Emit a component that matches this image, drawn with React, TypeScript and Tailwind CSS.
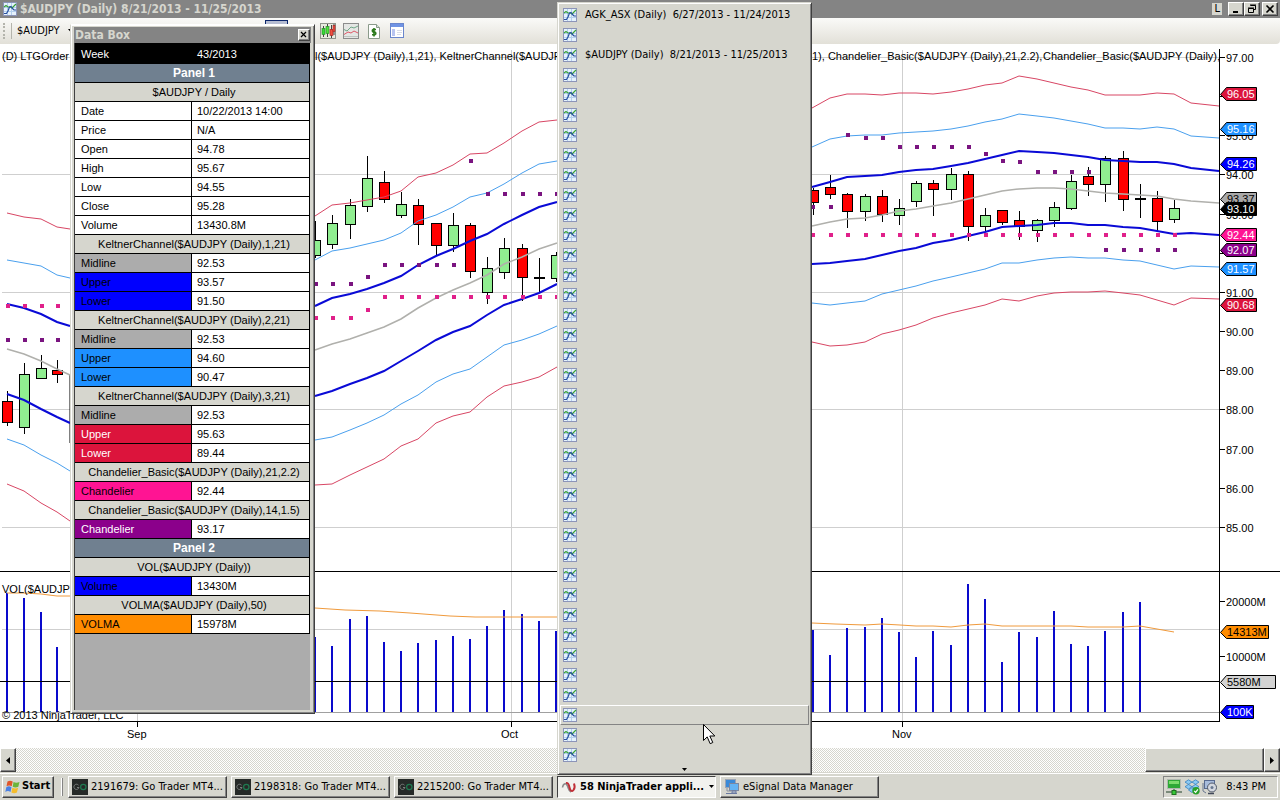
import React from 'react';
import clsx from 'clsx';

// ------------------------------------------------------------------
// Chart data (drawing units of the chart canvas)
// ------------------------------------------------------------------

type Candle = [x: number, high: number, top: number, bottom: number, low: number, kind: 'u' | 'd' | 'n'];

const LEFT_X = [7, 24, 41, 57, 70];
const MID_X = [315, 332, 350, 367, 384, 401, 418, 436, 453, 470, 487, 504, 522, 539, 557];
const RIGHT_X = [
  812, 830, 847, 865, 882, 899, 916, 933, 951, 968, 985, 1002, 1019, 1037, 1054, 1071, 1088, 1105, 1123, 1140, 1157,
  1174, 1191, 1219,
];

const CANDLES: Candle[] = [
  [7, 391, 402, 423, 426, 'd'],
  [24, 363, 375, 428, 434, 'u'],
  [41, 355, 369, 379, 379, 'u'],
  [57, 360, 371, 375, 383, 'd'],
  [315, 221, 241, 256, 258, 'u'],
  [332, 215, 224, 245, 249, 'u'],
  [350, 199, 206, 225, 239, 'u'],
  [367, 156, 179, 207, 212, 'u'],
  [384, 171, 183, 200, 203, 'd'],
  [401, 192, 205, 216, 218, 'u'],
  [418, 199, 206, 225, 245, 'd'],
  [436, 223, 224, 246, 256, 'd'],
  [453, 213, 226, 246, 252, 'u'],
  [470, 223, 226, 272, 278, 'd'],
  [487, 257, 269, 293, 304, 'u'],
  [504, 238, 249, 273, 279, 'u'],
  [522, 244, 249, 278, 301, 'd'],
  [539, 258, 278, 278, 293, 'n'],
  [556, 252, 256, 279, 282, 'u'],
  [813, 188, 191, 203, 215, 'd'],
  [830, 175, 188, 195, 199, 'd'],
  [847, 193, 195, 212, 228, 'd'],
  [865, 194, 197, 212, 221, 'u'],
  [882, 190, 197, 215, 222, 'd'],
  [899, 199, 209, 216, 225, 'u'],
  [916, 181, 184, 202, 207, 'u'],
  [933, 180, 184, 190, 216, 'd'],
  [951, 168, 175, 190, 200, 'u'],
  [968, 171, 175, 227, 241, 'd'],
  [985, 208, 216, 227, 231, 'u'],
  [1002, 211, 211, 223, 225, 'd'],
  [1019, 211, 221, 227, 240, 'd'],
  [1037, 219, 221, 231, 242, 'u'],
  [1054, 202, 208, 221, 227, 'u'],
  [1071, 175, 182, 209, 210, 'u'],
  [1088, 167, 177, 185, 196, 'd'],
  [1105, 156, 159, 185, 202, 'u'],
  [1123, 151, 159, 200, 211, 'd'],
  [1140, 184, 199, 199, 218, 'n'],
  [1157, 191, 199, 222, 231, 'd'],
  [1174, 200, 209, 220, 223, 'u'],
];

interface Channel {
  color: string;
  width: number;
  left: number[];
  mid: number[];
  right: number[];
}

const CHANNELS: Channel[] = [
  {
    color: '#d84664',
    width: 1,
    left: [213, 217, 219, 227, 229],
    mid: [216, 205, 203, 200, 197, 191, 177, 173, 165, 154, 153, 143, 131, 122, 120],
    right: [108, 98, 94, 94, 95, 93, 93, 94, 92, 89, 85, 83, 76, 79, 83, 87, 90, 95, 95, 95, 93, 94, 103, 106],
  },
  {
    color: '#4aa0ee',
    width: 1,
    left: [260, 263, 266, 275, 278],
    mid: [260, 251, 248, 244, 240, 233, 221, 215, 207, 197, 193, 184, 173, 164, 161],
    right: [
      147, 139, 136, 135, 135, 133, 132, 131, 129, 126, 122, 119, 114, 116, 118, 121, 124, 128, 128, 129, 127, 129, 136,
      138,
    ],
  },
  {
    color: '#0a0ad6',
    width: 2,
    left: [304, 308, 314, 322, 326],
    mid: [306, 298, 294, 289, 283, 276, 265, 256, 249, 241, 234, 224, 215, 207, 202],
    right: [
      187, 182, 177, 176, 175, 172, 170, 169, 166, 163, 159, 155, 151, 152, 153, 155, 157, 160, 161, 162, 162, 164, 168,
      171,
    ],
  },
  {
    color: '#b0b0ac',
    width: 1.5,
    left: [349, 354, 361, 369, 375],
    mid: [350, 344, 339, 333, 327, 319, 308, 298, 290, 283, 275, 264, 257, 249, 243],
    right: [
      226, 222, 219, 218, 215, 211, 209, 206, 203, 199, 195, 191, 189, 188, 188, 189, 191, 193, 194, 195, 196, 199, 201,
      203,
    ],
  },
  {
    color: '#0a0ad6',
    width: 2,
    left: [394, 400, 409, 417, 423],
    mid: [396, 391, 384, 378, 371, 361, 351, 340, 332, 326, 315, 305, 299, 293, 284],
    right: [
      264, 263, 261, 259, 255, 251, 248, 243, 240, 236, 232, 227, 226, 225, 223, 223, 225, 225, 227, 228, 231, 234, 233,
      235,
    ],
  },
  {
    color: '#4aa0ee',
    width: 1,
    left: [439, 445, 455, 463, 471],
    mid: [440, 437, 430, 423, 415, 404, 395, 382, 374, 369, 357, 345, 340, 334, 326],
    right: [
      303, 305, 303, 301, 294, 290, 286, 281, 277, 273, 269, 263, 263, 260, 258, 257, 258, 258, 260, 261, 265, 269, 266,
      267,
    ],
  },
  {
    color: '#d84664',
    width: 1,
    left: [484, 491, 503, 512, 521],
    mid: [485, 484, 475, 467, 459, 446, 439, 423, 416, 412, 397, 386, 382, 377, 367],
    right: [
      342, 346, 345, 342, 334, 330, 325, 318, 313, 309, 305, 299, 301, 296, 293, 292, 292, 291, 293, 295, 300, 305, 298,
      299,
    ],
  },
];

const PINK = '#e0208a';
const PURPLE = '#7a1480';

const DOTS: { color: string; y: number; xs: number[] }[] = [
  { color: PINK, y: 306, xs: [8, 25, 42, 58] },
  { color: PINK, y: 318, xs: [316, 333, 351] },
  { color: PINK, y: 310, xs: [368] },
  { color: PINK, y: 297, xs: [385, 402, 419, 437, 454, 471, 488, 505, 523, 540, 557] },
  { color: PINK, y: 235, xs: RIGHT_X.slice(0, 22).map((x) => x + 1) },
  { color: PURPLE, y: 340, xs: [8, 25, 42, 58] },
  { color: PURPLE, y: 284, xs: [316, 333, 351] },
  { color: PURPLE, y: 277, xs: [368] },
  { color: PURPLE, y: 265, xs: [385, 402, 419, 437, 454] },
  { color: PURPLE, y: 161, xs: [471] },
  { color: PURPLE, y: 194, xs: [488, 505, 523, 540, 557] },
  { color: PURPLE, y: 207, xs: [813, 831] },
  { color: PURPLE, y: 135, xs: [848] },
  { color: PURPLE, y: 138, xs: [866, 883] },
  { color: PURPLE, y: 147, xs: [900, 917, 934, 952, 969] },
  { color: PURPLE, y: 154, xs: [986] },
  { color: PURPLE, y: 161, xs: [1003] },
  { color: PURPLE, y: 162, xs: [1020] },
  { color: PURPLE, y: 172, xs: [1038, 1055, 1072, 1089] },
  { color: PURPLE, y: 250, xs: [1106, 1124, 1141, 1158, 1175] },
];

const VOLUME: [number, number][] = [
  [6, 593], [23, 598], [40, 612], [56, 647],
  [314, 637], [331, 646], [349, 619], [366, 616], [383, 642], [400, 651], [417, 643], [435, 640],
  [452, 636], [469, 639], [486, 626], [503, 610], [521, 614], [538, 621], [555, 631],
  [812, 630], [829, 655], [846, 628], [864, 627], [881, 618], [898, 632], [915, 657], [932, 631],
  [950, 645], [967, 584], [984, 599], [1001, 662], [1018, 632], [1036, 637], [1053, 611], [1070, 644],
  [1087, 646], [1104, 631], [1122, 612], [1139, 602],
];

const VOLMA = [
  '7,593 24,593 41,594 57,596 70,596',
  '315,608 345,610 380,611 410,613 450,616 475,617 557,617',
  '812,623 835,624 865,625 882,624 900,625 916,626 933,626 951,627 968,625 985,624 1002,626 1071,626 1088,627 1123,627 1140,626 1174,632',
];

const PRICE_TICKS = [97, 96, 95, 94, 93, 92, 91, 90, 89, 88, 87, 86, 85];
// these prices sit fully behind a value tag
const COVERED_TICKS = [96, 92];

const TAGS: { y: number; text: string; bg: string; fg: string; right: number }[] = [
  { y: 94, text: '96.05', bg: '#dc143c', fg: '#fff', right: 1257 },
  { y: 129, text: '95.16', bg: '#1e90ff', fg: '#fff', right: 1257 },
  { y: 164, text: '94.26', bg: '#0000ff', fg: '#fff', right: 1257 },
  { y: 199, text: '93.37', bg: '#a9a9a9', fg: '#000', right: 1257 },
  { y: 209, text: '93.10', bg: '#000', fg: '#fff', right: 1257 },
  { y: 235, text: '92.44', bg: '#ff1493', fg: '#fff', right: 1257 },
  { y: 250, text: '92.07', bg: '#8b008b', fg: '#fff', right: 1257 },
  { y: 269, text: '91.57', bg: '#1e90ff', fg: '#fff', right: 1257 },
  { y: 305, text: '90.68', bg: '#dc143c', fg: '#fff', right: 1257 },
  { y: 632, text: '14313M', bg: '#ff8c00', fg: '#000', right: 1269 },
  { y: 682, text: '5580M', bg: '#d3d3d3', fg: '#000', right: 1276 },
  { y: 712, text: '100K', bg: '#0000ff', fg: '#fff', right: 1254 },
];

const priceY = (price: number) => Math.round(58 + (97 - price) * 39.15);

const toPoints = (xs: number[], ys: number[]) => ys.map((y, i) => `${xs[i]},${y}`).join(' ');

// ------------------------------------------------------------------
// Icons
// ------------------------------------------------------------------

function ChartIcon() {
  return (
    <svg className="h-3.5 w-3.5 shrink-0" viewBox="0 0 14 14" aria-hidden="true">
      <rect x="0.5" y="0.5" width="13" height="13" fill="#e6f2fc" stroke="#8c94b8" />
      <path d="M4.5 1v12M8.5 1v12M1 5.5h12M1 9.5h12" stroke="#b4d0ee" />
      <path d="M1 5 3 3.500l2 1.500h2.500L9 6l4-4" fill="none" stroke="#38a038" strokeWidth="1.2" />
      <path d="M1 11.5h2.500L5 9l1.500-4L8 4.500l1.500 2L11 8h2" fill="none" stroke="#2850a0" strokeWidth="1.2" />
    </svg>
  );
}

function CandlesIcon() {
  return (
    <svg className="h-4 w-4" viewBox="0 0 16 16" aria-hidden="true">
      <rect x="0.5" y="0.5" width="15" height="15" fill="#e8ece0" stroke="#90948c" />
      <path d="M3.5 3v11M7.5 1v13M11.5 2v13M14 1v11" stroke="#444" />
      <rect x="2" y="5.5" width="3" height="6" fill="#38d838" stroke="#1f8a1f" strokeWidth="0.6" />
      <rect x="6" y="3.5" width="3" height="7" fill="#50e040" stroke="#1f8a1f" strokeWidth="0.6" />
      <rect x="10" y="6.5" width="3" height="6" fill="#f05040" stroke="#a02020" strokeWidth="0.6" />
      <rect x="13" y="2.5" width="2" height="6" fill="#f05040" stroke="#a02020" strokeWidth="0.6" />
    </svg>
  );
}

function LinesIcon() {
  return (
    <svg className="h-4 w-4" viewBox="0 0 16 16" aria-hidden="true">
      <rect x="0.5" y="0.5" width="15" height="15" fill="#e4e6e4" stroke="#8c8c8c" />
      <path d="M1 6.5 4 8l4-4 3 1 4-2" fill="none" stroke="#70a888" />
      <path d="M1 11.5 5 9l3 1 3-2 4 2" fill="none" stroke="#e05868" />
      <path d="M1 13.5h14" stroke="#c0c4c0" />
    </svg>
  );
}

function DollarIcon() {
  return (
    <svg className="h-4 w-4" viewBox="0 0 16 16" aria-hidden="true">
      <path d="M2.5 1.5h8l3 3v11h-11z" fill="#fff" stroke="#8a9a8a" />
      <path d="M10.5 1.5v3h3" fill="#d8e4d8" stroke="#8a9a8a" />
      <path d="M10 6.5H7.2a1.4 1.4 0 0 0 0 2.6h1.6a1.4 1.4 0 0 1 0 2.7H6M8 5v8.5" fill="none" stroke="#2c7a1c" strokeWidth="1.6" />
    </svg>
  );
}

function PanelIcon() {
  return (
    <svg className="h-4 w-4" viewBox="0 0 16 16" aria-hidden="true">
      <rect x="1.5" y="0.5" width="13" height="14" fill="#fff" stroke="#6a86cc" />
      <rect x="2" y="1" width="12" height="3" fill="#6f93e4" />
      <rect x="3" y="6" width="3" height="7" fill="#b8c4f0" />
      <path d="M8 7.5h5M8 9.5h5M8 11.5h4" stroke="#d8dce8" />
    </svg>
  );
}

function GoIcon() {
  return (
    <svg className="h-4 w-4 shrink-0" viewBox="0 0 16 16" aria-hidden="true">
      <rect width="16" height="16" fill="#262a28" />
      <path d="M6.5 6.2A2.6 2.6 0 1 0 7 8.5H5" fill="none" stroke="#7a7e7c" />
      <circle cx="11.3" cy="8" r="2.7" fill="none" stroke="#1f7a50" strokeWidth="1.2" />
    </svg>
  );
}

function NinjaIcon() {
  return (
    <svg className="h-4 w-4 shrink-0" viewBox="0 0 16 16" aria-hidden="true">
      <path d="M1.500 8.500C2 5 4.500 3.500 6 6s1.500 6 4 7" fill="none" stroke="#8a8a8a" strokeWidth="1.6" />
      <path d="M5 4c2.500-.5 3 2 3.500 4.500s2 5 4 2.500 1-5 .5-6.500" fill="none" stroke="#c03038" strokeWidth="2" />
    </svg>
  );
}

function ComputersIcon() {
  return (
    <svg className="h-4 w-4 shrink-0" viewBox="0 0 16 16" aria-hidden="true">
      <rect x="1.5" y="0.5" width="10" height="8" fill="#3a8ad8" stroke="#9aa4b4" />
      <rect x="5.5" y="4.5" width="9" height="7" fill="#64b4f4" stroke="#7c88a0" />
      <path d="M8 12h4v2H8zM2 14.5h11" stroke="#6878a0" fill="#c8ccd4" />
      <path d="M3 9v3h4" fill="none" stroke="#8890a0" />
    </svg>
  );
}

function WindowsIcon() {
  return (
    <svg className="h-4 w-4 shrink-0" viewBox="0 0 16 16" aria-hidden="true">
      <path d="M2.500 2.500c2-1.300 3.500-1 5.200 0L6.700 7.300c-1.700-1-3.200-1.200-5.200 0z" fill="#e0562a" />
      <path d="M8.500 3c2 1 3.700 1 6 0l-1.200 4.800c-2 1-3.800 1-5.600 0z" fill="#6cb43c" />
      <path d="M1.300 8.200c2-1.200 3.500-1 5.200 0l-1 4.700c-1.700-1-3.200-1.200-5.200 0z" fill="#4a80e4" />
      <path d="M7.400 8.700c2 1 3.600 1 5.700 0l-1.200 4.700c-2 1-3.700 1-5.500 0z" fill="#f4bc2c" />
    </svg>
  );
}

function NetworkIcon() {
  return (
    <svg className="h-4 w-4" viewBox="0 0 16 16" aria-hidden="true">
      <rect x="1.5" y="0.5" width="13" height="9" fill="#2ea836" stroke="#b0b8b0" />
      <path d="M3 2h10v3H3z" fill="#7cdc6c" />
      <path d="M8 10v3M0 13h16" stroke="#7a8a7a" strokeWidth="2" />
      <rect x="6" y="11.5" width="4" height="4" fill="#38c838" stroke="#1c701c" />
    </svg>
  );
}

function DropboxIcon() {
  return (
    <svg className="h-4 w-4" viewBox="0 0 16 16" aria-hidden="true">
      <path
        d="m4.500.800 3.500 2.300-3.500 2.300L1 3.100zm7 0L15 3.100l-3.500 2.300L8 3.100zM4.500 5.400 8 7.700 4.500 10 1 7.700zm7 0L15 7.700 11.500 10 8 7.700zM8 8.700l3.500 2.300L8 13.500 4.500 11z"
        fill="#8ccaf4"
        stroke="#2c78b8"
        strokeWidth="0.7"
      />
      <circle cx="12" cy="11.8" r="3.7" fill="#28a028" />
      <path d="m10.200 11.800 1.400 1.500 2.300-3" fill="none" stroke="#fff" strokeWidth="1.2" />
    </svg>
  );
}

function DriveIcon() {
  return (
    <svg className="h-4 w-4" viewBox="0 0 16 16" aria-hidden="true">
      <rect x="2.5" y="1.5" width="10" height="8" fill="#a8bcdc" stroke="#586a90" />
      <path d="M1 4v8l3 2" fill="none" stroke="#6a7890" />
      <circle cx="10" cy="8.5" r="4.5" fill="#d4d8e0" stroke="#505868" />
      <circle cx="10" cy="8.5" r="1.5" fill="#687890" />
      <path d="M6 14.5h6" stroke="#404858" strokeWidth="1.5" />
    </svg>
  );
}

// ------------------------------------------------------------------
// Classic raised button
// ------------------------------------------------------------------

const RAISED =
  'border border-t-white border-l-white border-r-[#404040] border-b-[#404040] bg-[#d6d6ce] shadow-[inset_-1px_-1px_0_#848484]';

function BevelButton({
  className,
  children,
  ...rest
}: React.ButtonHTMLAttributes<HTMLButtonElement>) {
  return (
    <button type="button" className={clsx(RAISED, 'flex items-center', className)} {...rest}>
      {children}
    </button>
  );
}

// ------------------------------------------------------------------
// Title bar and toolbar
// ------------------------------------------------------------------

function TitleBar() {
  return (
    <header className="flex h-[18px] items-center gap-[3px] bg-[#848484] pr-0.5 pl-[3px]">
      <ChartIcon />
      <h1 className="text-[12px] leading-4 font-bold whitespace-pre text-[#d6d6ce]">
        {'$AUDJPY (Daily) 8/21/2013 - 11/25/2013'}
      </h1>
      <div className="ml-auto flex items-center">
        <span className="mr-1.5 bg-[#d6d6ce] px-0.5 text-[11px] leading-[12px]">L</span>
        <BevelButton className="h-3.5 w-4 justify-center" aria-label="Minimize">
          <svg className="h-2.5 w-2.5" viewBox="0 0 10 10">
            <path d="M2 8h5" stroke="#000" strokeWidth="2" />
          </svg>
        </BevelButton>
        <BevelButton className="h-3.5 w-4 justify-center" aria-label="Restore">
          <svg className="h-2.5 w-2.5" viewBox="0 0 10 10">
            <path d="M3.500 1.500h5v4h-2M3 1h6M1.500 4.500h5v4h-5zM1 4h6" fill="none" stroke="#000" />
          </svg>
        </BevelButton>
        <BevelButton className="ml-0.5 h-3.5 w-4 justify-center" aria-label="Close">
          <svg className="h-2.5 w-2.5" viewBox="0 0 10 10">
            <path d="m1.500 1.500 7 7m0-7-7 7" stroke="#000" strokeWidth="1.6" />
          </svg>
        </BevelButton>
      </div>
    </header>
  );
}

function Toolbar() {
  return (
    <div className="flex h-[26px] items-center rounded-br-sm bg-linear-to-b from-[#fafaf8] to-[#e2e0d8] pl-[3px]">
      <span className="h-4 w-0 border-l-2 border-dotted border-[#b4b4ac]" />
      <span className="ml-1.5 h-4 w-px bg-[#b4b4ac]" />
      <label className="ml-[5px] flex items-center">
        <select aria-label="Instrument" className="w-12 appearance-none bg-transparent text-[11px] leading-4">
          <option>$AUDJPY</option>
        </select>
        <svg className="ml-0.5 h-1 w-2" viewBox="0 0 8 4" aria-hidden="true">
          <path d="M1 0h5L3.500 3z" />
        </svg>
      </label>
      <button
        type="button"
        aria-label="Data Box"
        className="ml-[190px] h-[22px] w-[23px] border border-[#0a246a] bg-[#b6bdd2]"
      />
      <div className="ml-8 flex gap-[7px]">
        <button type="button" aria-label="Chart style"><CandlesIcon /></button>
        <button type="button" aria-label="Indicators"><LinesIcon /></button>
        <button type="button" aria-label="Strategies"><DollarIcon /></button>
        <button type="button" aria-label="Properties"><PanelIcon /></button>
      </div>
    </div>
  );
}

// ------------------------------------------------------------------
// Chart
// ------------------------------------------------------------------

function ChartCanvas() {
  return (
    <svg
      className="block w-full bg-white font-['Liberation_Sans',sans-serif] text-[11px]"
      viewBox="0 44 1280 704"
      role="img"
      aria-label="$AUDJPY daily price and volume"
    >
      <defs>
        <clipPath id="plot">
          <rect x="0" y="44" width="1219" height="704" />
        </clipPath>
      </defs>

      {/* grid */}
      <g stroke="#cfcfcf" shapeRendering="crispEdges">
        {[97, 94, 91, 88, 85].map((p) => (
          <line key={p} x1="2" x2="1219" y1={priceY(p) - 0.5} y2={priceY(p) - 0.5} />
        ))}
        <line x1="2" x2="1219" y1="629.5" y2="629.5" />
        {[137.5, 511.5, 902.5].map((x) => (
          <line key={x} x1={x} x2={x} y1="50" y2="721" />
        ))}
        <line x1="2" x2="1219" y1="712.5" y2="712.5" stroke="#a0a0a0" />
      </g>

      {/* volume */}
      <g fill="#0a0acc">
        {VOLUME.map(([x, y]) => (
          <rect key={x} x={x} y={y} width="2" height={712 - y} />
        ))}
      </g>
      <line x1="0" x2="1219" y1="681.5" y2="681.5" stroke="#000" />
      {VOLMA.map((points) => (
        <polyline key={points} points={points} fill="none" stroke="#f09a3c" />
      ))}

      {/* candles */}
      <path d="M70 375V443" stroke="#000" />
      {CANDLES.map(([x, high, top, bottom, low, kind]) => (
        <g key={x} stroke="#000" shapeRendering="crispEdges">
          <line x1={x + 0.5} x2={x + 0.5} y1={high} y2={low} />
          {kind === 'n' ? (
            <line x1={x - 5} x2={x + 6} y1={top} y2={top} strokeWidth="2" />
          ) : (
            <rect
              x={x - 4.5}
              y={top - 0.5}
              width="10"
              height={bottom - top}
              fill={kind === 'u' ? '#90ee90' : '#ff0000'}
            />
          )}
        </g>
      ))}

      {/* channels */}
      {CHANNELS.map((c, i) => (
        <g key={i} fill="none" stroke={c.color} strokeWidth={c.width}>
          <polyline points={toPoints(LEFT_X, c.left)} />
          <polyline points={toPoints(MID_X, c.mid)} />
          <polyline points={toPoints(RIGHT_X, c.right)} />
        </g>
      ))}

      {DOTS.map((d) =>
        d.xs.map((x) => <rect key={`${x}-${d.y}`} x={x - 2} y={d.y - 2} width="4" height="4" fill={d.color} />)
      )}

      {/* frame */}
      <g stroke="#000" shapeRendering="crispEdges">
        <line x1="0" x2="1280" y1="571.5" y2="571.5" />
        <line x1="0" x2="1220" y1="721.5" y2="721.5" />
        <line x1="1219.5" x2="1219.5" y1="49" y2="721" />
        {[137.5, 511.5, 902.5].map((x) => (
          <line key={x} x1={x} x2={x} y1="721" y2="727" />
        ))}
        {PRICE_TICKS.map((p) => (
          <line key={p} x1="1219" x2="1225" y1={priceY(p) - 0.5} y2={priceY(p) - 0.5} />
        ))}
        <line x1="1219" x2="1225" y1="601.5" y2="601.5" />
        <line x1="1219" x2="1225" y1="656.5" y2="656.5" />
      </g>

      {/* labels */}
      <g className="whitespace-pre">
        {PRICE_TICKS.filter((p) => !COVERED_TICKS.includes(p)).map((p) => (
          <text key={p} x="1226" y={priceY(p) + 4}>{p.toFixed(2)}</text>
        ))}
        <text x="1226" y="606">20000M</text>
        <text x="1226" y="661">10000M</text>
        <text x="127" y="738">Sep</text>
        <text x="501" y="738">Oct</text>
        <text x="892" y="738">Nov</text>
        <g clipPath="url(#plot)">
          <text x="2" y="60">(D) LTGOrder</text>
          <text x="315" y="60">{'l($AUDJPY  (Daily),1,21),  KeltnerChannel($AUDJPY'}</text>
          <text x="812" y="60">{'1),  Chandelier_Basic($AUDJPY (Daily),21,2.2),'}</text>
          <text x="1043" y="60">{'Chandelier_Basic($AUDJPY (Daily),14'}</text>
        </g>
        <text x="2" y="593">VOL($AUDJPY</text>
        <text x="2" y="719">© 2013 NinjaTrader, LLC</text>
      </g>

      {/* value tags on the axis */}
      {TAGS.map((t) => (
        <g key={t.y}>
          <path
            d={`M1220.5 ${t.y + 0.5}L1226.5 ${t.y - 6.5}H${t.right - 0.5}V${t.y + 6.5}H1226.5Z`}
            fill={t.bg}
            stroke="#000"
          />
          <text x="1227" y={t.y + 4} fill={t.fg}>{t.text}</text>
        </g>
      ))}
    </svg>
  );
}

// ------------------------------------------------------------------
// Data box
// ------------------------------------------------------------------

type BoxRow =
  | { type: 'panel'; label: string }
  | { type: 'group'; label: string }
  | { type: 'value'; label: string; value: string; tone?: string };

const GRAY = 'bg-[#acacac]';
const BLUE = 'bg-[#0000ff]';
const SKY = 'bg-[#1e90ff]';
const RED = 'bg-[#dc143c] text-white';

const BOX_ROWS: BoxRow[] = [
  { type: 'panel', label: 'Panel 1' },
  { type: 'group', label: '$AUDJPY / Daily' },
  { type: 'value', label: 'Date', value: '10/22/2013 14:00' },
  { type: 'value', label: 'Price', value: 'N/A' },
  { type: 'value', label: 'Open', value: '94.78' },
  { type: 'value', label: 'High', value: '95.67' },
  { type: 'value', label: 'Low', value: '94.55' },
  { type: 'value', label: 'Close', value: '95.28' },
  { type: 'value', label: 'Volume', value: '13430.8M' },
  { type: 'group', label: 'KeltnerChannel($AUDJPY (Daily),1,21)' },
  { type: 'value', label: 'Midline', value: '92.53', tone: GRAY },
  { type: 'value', label: 'Upper', value: '93.57', tone: BLUE },
  { type: 'value', label: 'Lower', value: '91.50', tone: BLUE },
  { type: 'group', label: 'KeltnerChannel($AUDJPY (Daily),2,21)' },
  { type: 'value', label: 'Midline', value: '92.53', tone: GRAY },
  { type: 'value', label: 'Upper', value: '94.60', tone: SKY },
  { type: 'value', label: 'Lower', value: '90.47', tone: SKY },
  { type: 'group', label: 'KeltnerChannel($AUDJPY (Daily),3,21)' },
  { type: 'value', label: 'Midline', value: '92.53', tone: GRAY },
  { type: 'value', label: 'Upper', value: '95.63', tone: RED },
  { type: 'value', label: 'Lower', value: '89.44', tone: RED },
  { type: 'group', label: 'Chandelier_Basic($AUDJPY (Daily),21,2.2)' },
  { type: 'value', label: 'Chandelier', value: '92.44', tone: 'bg-[#ff1493]' },
  { type: 'group', label: 'Chandelier_Basic($AUDJPY (Daily),14,1.5)' },
  { type: 'value', label: 'Chandelier', value: '93.17', tone: 'bg-[#8b008b] text-white' },
  { type: 'panel', label: 'Panel 2' },
  { type: 'group', label: 'VOL($AUDJPY (Daily))' },
  { type: 'value', label: 'Volume', value: '13430M', tone: BLUE },
  { type: 'group', label: 'VOLMA($AUDJPY (Daily),50)' },
  { type: 'value', label: 'VOLMA', value: '15978M', tone: 'bg-[#ff8c00]' },
];

function DataBox() {
  return (
    <section
      aria-label="Data Box"
      className="absolute top-6 left-[70px] flex h-[690px] w-[245px] flex-col border border-t-white border-l-[#d6d6ce] border-r-[#404040] border-b-[#404040] bg-[#d6d6ce] px-[3px] pt-0.5 pb-[3px] shadow-[inset_1px_1px_0_#fff,inset_-1px_-1px_0_#848484]"
    >
      <div className="flex h-4 shrink-0 items-center justify-between bg-[#848484] pr-px pl-px">
        <h2 className="text-[12px] leading-4 font-bold text-[#d6d6ce]">Data Box</h2>
        <BevelButton className="h-3 w-3 justify-center" aria-label="Close data box">
          <svg className="h-2 w-2 shrink-0" viewBox="0 0 8 8">
            <path d="m1 1 5 5m0-5-5 5" stroke="#000" strokeWidth="1.2" />
          </svg>
        </BevelButton>
      </div>
      <div className="flex-1 border border-t-0 border-b-0 border-[#404040] border-r-[#d6d6ce] bg-[#acacac]">
        <table className="w-full table-fixed border-separate border-spacing-0 font-['Liberation_Sans',sans-serif] text-[11px] leading-[18px]">
          <thead>
            <tr className="bg-black text-white">
              <th className="h-[21px] w-[117px] p-0 pl-1.5 text-left font-normal">Week</th>
              <th className="h-[21px] p-0 pl-[5px] text-left font-normal">43/2013</th>
            </tr>
          </thead>
          <tbody>
            {BOX_ROWS.map((row, i) =>
              row.type === 'value' ? (
                <tr key={i}>
                  <td className={clsx('border-r border-b border-black p-0 pl-1.5', row.tone ?? 'bg-white')}>
                    {row.label}
                  </td>
                  <td className="border-r border-b border-black bg-white p-0 pl-[5px]">{row.value}</td>
                </tr>
              ) : (
                <tr key={i}>
                  <th
                    colSpan={2}
                    className={clsx(
                      'border-r border-b border-black p-0 pl-1 text-center whitespace-pre',
                      row.type === 'panel' ? 'bg-[#708090] text-[12px] text-white' : 'bg-[#d6d6ce] font-normal'
                    )}
                  >
                    {row.label}
                  </th>
                </tr>
              )
            )}
          </tbody>
        </table>
      </div>
    </section>
  );
}

// ------------------------------------------------------------------
// Grouped window list
// ------------------------------------------------------------------

const WINDOW_NAMES: Record<number, string> = {
  0: 'AGK_ASX (Daily)  6/27/2013 - 11/24/2013',
  2: '$AUDJPY (Daily)  8/21/2013 - 11/25/2013',
};
const WINDOW_COUNT = 38;
const HOVERED = 35;

function WindowList() {
  return (
    <div
      role="menu"
      aria-label="NinjaTrader windows"
      className="absolute bottom-[25px] left-[557px] z-10 w-[255px] border border-t-[#d6d6ce] border-l-[#d6d6ce] border-r-[#404040] border-b-[#404040] bg-[#d6d6ce] px-0.5 pt-0.5 shadow-[inset_1px_1px_0_#fff,inset_-1px_-1px_0_#848484]"
    >
      {Array.from({ length: WINDOW_COUNT }, (_, i) => (
        <button
          key={i}
          type="button"
          role="menuitem"
          aria-label={WINDOW_NAMES[i] ?? `Window ${i + 1}`}
          className={clsx(
            'flex h-5 w-full items-center gap-2 border pl-0.5 text-[11px] leading-4 whitespace-pre',
            i === HOVERED ? 'border-t-white border-l-white border-r-[#848484] border-b-[#848484]' : 'border-transparent'
          )}
        >
          <ChartIcon />
          {WINDOW_NAMES[i]}
        </button>
      ))}
      <div className="flex h-[9px] items-center justify-center">
        <svg className="h-[3px] w-[5px]" viewBox="0 0 5 3" aria-hidden="true">
          <path d="M0 0h5L2.500 3z" />
        </svg>
      </div>
    </div>
  );
}

function Cursor() {
  return (
    <svg
      className="pointer-events-none absolute top-[724px] left-[703px] z-20 h-[21px] w-3"
      viewBox="0 0 12 21"
      aria-hidden="true"
    >
      <path d="M.5.500v16l3.700-3.600 3 6.800 2.600-1.200-3-6.500h5z" fill="#fff" stroke="#000" />
    </svg>
  );
}

// ------------------------------------------------------------------
// Scroll bar and task bar
// ------------------------------------------------------------------

function ScrollBar() {
  return (
    <div className="flex h-6 bg-[repeating-conic-gradient(#fff_0_25%,#d6d6ce_0_50%)] bg-[size:2px_2px]">
      <BevelButton className="w-4 justify-center" aria-label="Scroll left">
        <svg className="h-[7px] w-1" viewBox="0 0 4 7">
          <path d="M4 0v7L0 3.500z" />
        </svg>
      </BevelButton>
      <BevelButton className="ml-auto w-[119px]" aria-label="Scroll position" />
      <BevelButton className="w-4 justify-center" aria-label="Scroll right">
        <svg className="h-[7px] w-1" viewBox="0 0 4 7">
          <path d="M0 0v7l4-3.500z" />
        </svg>
      </BevelButton>
    </div>
  );
}

const TASKS = [
  { label: '2191679: Go Trader MT4...', icon: <GoIcon /> },
  { label: '2198318: Go Trader MT4...', icon: <GoIcon /> },
  { label: '2215200: Go Trader MT4...', icon: <GoIcon /> },
  { label: '58 NinjaTrader appli...', icon: <NinjaIcon />, active: true },
  { label: 'eSignal Data Manager', icon: <ComputersIcon /> },
];

function TaskBar() {
  return (
    <footer className="flex h-7 items-center border-t border-[#d6d6ce] bg-[#d6d6ce] pr-0.5 pl-0.5 shadow-[inset_0_1px_0_#fff]">
      <BevelButton className="h-[22px] w-[52px] gap-px pl-0.5 text-[11px] font-bold">
        <WindowsIcon />
        Start
      </BevelButton>
      <span className="mr-[5px] ml-[7px] h-[18px] w-0.5 border-r border-l border-l-white border-r-[#848484]" />
      <div className="flex min-w-0 flex-1 gap-1 pr-4">
        {TASKS.map((t) => (
          <button
            key={t.label}
            type="button"
            className={clsx(
              'flex h-[22px] w-[159px] min-w-0 items-center gap-[3px] border pl-[3px] text-[11px] leading-4 whitespace-nowrap',
              t.active
                ? 'border-t-[#404040] border-l-[#404040] border-r-white border-b-white bg-[#f2f2ee] font-bold'
                : 'border-t-white border-l-white border-r-[#404040] border-b-[#404040] bg-[#d6d6ce] shadow-[inset_-1px_-1px_0_#848484]'
            )}
          >
            {t.icon}
            <span>{t.label}</span>
            {t.active && (
              <svg className="mr-px ml-auto h-[3px] w-[5px] shrink-0" viewBox="0 0 5 3" aria-hidden="true">
                <path d="M0 0h5L2.500 3z" />
              </svg>
            )}
          </button>
        ))}
      </div>
      <div className="flex h-[22px] shrink-0 items-center gap-0.5 border border-t-[#848484] border-l-[#848484] border-r-white border-b-white pr-[11px] pl-0.5">
        <NetworkIcon />
        <DropboxIcon />
        <DriveIcon />
        <time className="ml-1.5 text-[11px] leading-4">8:43 PM</time>
      </div>
    </footer>
  );
}

export default function App() {
  return (
    <div className="relative flex min-h-screen flex-col bg-white font-['DejaVu_Sans_Condensed','DejaVu_Sans',sans-serif] text-black">
      <TitleBar />
      <Toolbar />
      <main className="flex-1">
        <ChartCanvas />
      </main>
      <ScrollBar />
      <TaskBar />
      <DataBox />
      <WindowList />
      <Cursor />
    </div>
  );
}
